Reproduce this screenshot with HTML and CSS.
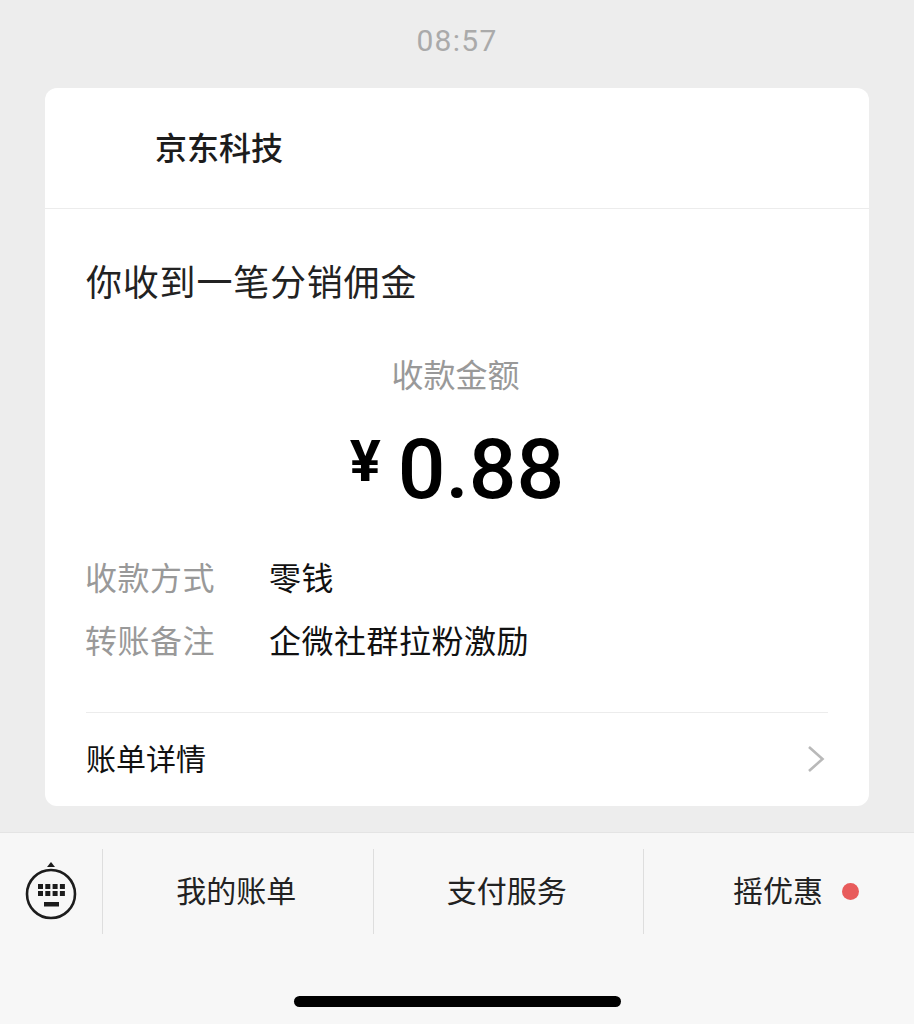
FILE: index.html

```html
<!DOCTYPE html>
<html>
<head>
  <title>京东科技</title>
  <link rel="stylesheet" href="styles.css">
</head>
<body>
    <div class="chat">
        <p class="time">08:57</p>
        <section class="card">
            <h2 class="sender">京东科技</h2>
            <div class="content">
                <h1 class="notice">你收到一笔分销佣金</h1>
                <p class="amount-label">收款金额</p>
                <p class="amount"><span class="currency">¥</span>0.88</p>
                <div class="row">
                    <span class="row-label">收款方式</span>
                    <span>零钱</span>
                </div>
                <div class="row">
                    <span class="row-label">转账备注</span>
                    <span>企微社群拉粉激励</span>
                </div>
                <div class="details">
                    <span>账单详情</span>
                    <svg class="chevron" width="18" height="28" viewBox="0 0 18 28">
                        <path d="M2 2 L15.5 14 L2 26" fill="none" stroke="#b9b9b9" stroke-width="2.6"/>
                    </svg>
                </div>
            </div>
        </section>
    </div>
    <div class="toolbar">
        <div class="menu">
            <div class="keyboard">
                <svg width="52" height="58" viewBox="0 0 52 58">
                    <path d="M26 0 L30 5 L22 5 Z" fill="#1c1c1c"/>
                    <circle cx="26" cy="32" r="24" fill="none" stroke="#1c1c1c" stroke-width="2.6"/>
                    <g fill="#1c1c1c">
                        <rect x="13" y="22" width="5" height="5"/>
                        <rect x="20.300" y="22" width="5" height="5"/>
                        <rect x="27.600" y="22" width="5" height="5"/>
                        <rect x="34.900" y="22" width="5" height="5"/>
                        <rect x="13" y="29" width="5" height="5"/>
                        <rect x="20.300" y="29" width="5" height="5"/>
                        <rect x="27.600" y="29" width="5" height="5"/>
                        <rect x="34.900" y="29" width="5" height="5"/>
                        <rect x="19" y="40" width="15" height="4.500"/>
                    </g>
                </svg>
            </div>
            <div class="menu-item">我的账单</div>
            <div class="menu-item">支付服务</div>
            <div class="menu-item last">摇优惠<span class="dot"></span></div>
        </div>
        <div class="home-bar"></div>
    </div>
</body>
</html>
```

FILE: styles.css

```css
* {
    box-sizing: border-box;
}

body {
    margin: 0;
    height: 1024px;
    overflow: hidden;
    background-color: #ededed;
    font-family: "Noto Sans CJK SC", "Liberation Sans", sans-serif;
    color: #111;
}

p, h1, h2 {
    margin: 0;
    font-weight: normal;
}

.chat {
    height: 832px;
    padding: 0 45px;
}

.time {
    height: 88px;
    padding-top: 21px;
    line-height: 40px;
    text-align: center;
    font-family: Roboto, sans-serif;
    font-size: 30px;
    letter-spacing: 1.3px;
    color: #aaa;
}

.card {
    height: 718px;
    background-color: white;
    border-radius: 12px;
}

.sender {
    height: 121px;
    padding: 35px 0 0 110px;
    line-height: 46px;
    font-size: 32px;
    font-weight: 500;
    color: #1c1c1c;
    border-bottom: 1px solid #ececec;
}

.content {
    padding: 0 41px;
}

.notice {
    padding-top: 45px;
    line-height: 52px;
    font-size: 36px;
    letter-spacing: 0.8px;
    color: #222;
}

.amount-label {
    margin-top: 44px;
    padding-right: 3px;
    line-height: 46px;
    text-align: center;
    font-size: 32px;
    color: #999;
}

.amount {
    margin-top: 15px;
    height: 100px;
    line-height: 100px;
    text-align: center;
    font-family: Roboto, sans-serif;
    font-size: 84px;
    font-weight: 500;
    color: black;
}

.currency {
    font-size: 58px;
    font-weight: 700;
    margin-right: 17px;
    vertical-align: 17px;
}

.row {
    display: flex;
    height: 63px;
    margin-left: -1px;
    align-items: center;
    font-size: 32px;
    letter-spacing: 0.5px;
    color: #111;
}

.row:first-of-type {
    margin-top: 33px;
}

.row-label {
    width: 184px;
    color: #999;
}

.details {
    display: flex;
    justify-content: space-between;
    align-items: center;
    margin-top: 42px;
    height: 88px;
    font-size: 30px;
    border-top: 1px solid #ececec;
}

.chevron {
    margin: 4px 3px 0 0;
}

.toolbar {
    height: 192px;
    background-color: #f7f7f7;
    border-top: 1px solid #e4e4e4;
    padding-top: 16px;
}

.menu {
    display: flex;
    height: 85px;
}

.keyboard {
    width: 102px;
    padding: 13px 0 0 25px;
}

.menu-item {
    flex: 0 0 270.5px;
    display: flex;
    align-items: center;
    justify-content: center;
    padding: 0 3px 5px 0;
    font-size: 30px;
    color: #222;
    border-left: 1px solid #dedede;
}

.menu-item.last {
    flex: 1;
    justify-content: flex-start;
    padding-left: 89px;
}

.dot {
    width: 17px;
    height: 17px;
    margin: 4px 0 0 19px;
    border-radius: 50%;
    background-color: #e85b5b;
}

.home-bar {
    width: 327px;
    height: 11px;
    margin: 62px 0 0 294px;
    border-radius: 6px;
    background-color: black;
}
```
